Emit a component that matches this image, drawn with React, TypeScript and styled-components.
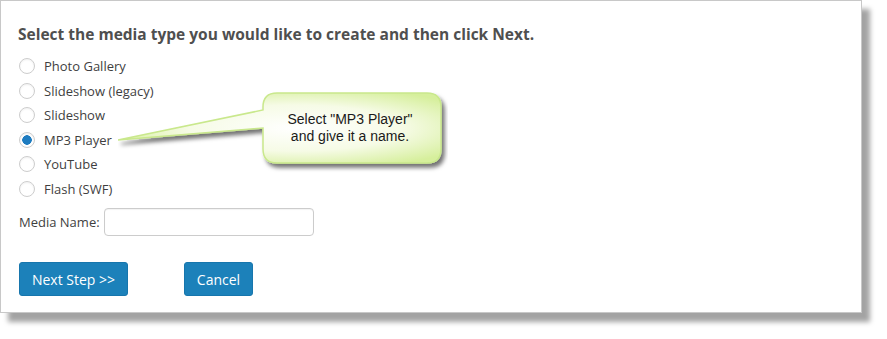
import React, { FC, useState } from "react";
import styled, { createGlobalStyle } from "styled-components";

const GlobalStyle = createGlobalStyle`
  body {
    margin: 0;
    background: #ffffff;
    font-family: "Open Sans", "Liberation Sans", sans-serif;
  }
`;

const mediaTypes = [
  "Photo Gallery",
  "Slideshow (legacy)",
  "Slideshow",
  "MP3 Player",
  "YouTube",
  "Flash (SWF)",
];

const App: FC = () => {
  const [selected, setSelected] = useState("MP3 Player");

  return (
    <>
      <GlobalStyle />
      <Page>
        <Panel>
          <Title>Select the media type you would like to create and then click Next.</Title>
          <RadioList>
            {mediaTypes.map((type) => (
              <RadioRow key={type} onClick={() => setSelected(type)}>
                <Radio $checked={selected === type} />
                <span>{type}</span>
              </RadioRow>
            ))}
          </RadioList>
          <NameRow>
            <label htmlFor="media-name">Media Name:</label>
            <NameInput id="media-name" type="text" />
          </NameRow>
          <ButtonRow>
            <Button $width={109}>Next Step &gt;&gt;</Button>
            <Button $width={69}>Cancel</Button>
          </ButtonRow>
        </Panel>
        <Callout>
          <svg width="330" height="82" viewBox="0 0 330 82">
            <defs>
              <radialGradient id="bubbleFill" cx="0.55" cy="0.5" r="0.6">
                <stop offset="0" stopColor="#ffffff" />
                <stop offset="0.55" stopColor="#f6fbe6" />
                <stop offset="1" stopColor="#d6ef9c" />
              </radialGradient>
              <filter id="bubbleShadow" x="-5%" y="-10%" width="115%" height="140%">
                <feDropShadow dx="3" dy="4" stdDeviation="2" floodColor="#000" floodOpacity="0.55" />
              </filter>
            </defs>
            <path
              d="M159 1 H309 Q323 1 323 15 V57 Q323 71 309 71 H159 Q145 71 145 57 V36 L0 48 L145 18 V15 Q145 1 159 1 Z"
              fill="url(#bubbleFill)"
              stroke="#c9e88c"
              strokeWidth="1.5"
              filter="url(#bubbleShadow)"
            />
          </svg>
          <CalloutText>
            Select "MP3 Player"
            <br />
            and give it a name.
          </CalloutText>
        </Callout>
      </Page>
    </>
  );
};

const Page = styled.div`
  position: relative;
  width: 887px;
  height: 339px;
`;

const Panel = styled.div`
  box-sizing: border-box;
  width: 862px;
  height: 313px;
  padding: 22px 17px 0 17px;
  background: #ffffff;
  border: 1px solid #c8c8c8;
  box-shadow: 8px 9px 5px rgba(0, 0, 0, 0.36);
  color: #444;
`;

const Title = styled.h2`
  margin: 0 0 9px 0;
  font-size: 15.5px;
  line-height: 22px;
  font-weight: 700;
  color: #4f4f4f;
`;

const RadioList = styled.div`
  display: flex;
  flex-direction: column;
`;

const RadioRow = styled.div`
  display: flex;
  align-items: center;
  gap: 9px;
  height: 24.5px;
  padding-left: 1px;
  font-size: 13px;
  color: #3f3f3f;
  cursor: pointer;
`;

const Radio = styled.span<{ $checked: boolean }>`
  box-sizing: border-box;
  width: 16px;
  height: 16px;
  border-radius: 50%;
  border: 1px solid #cdcdcd;
  background: ${({ $checked }) =>
    $checked ? "radial-gradient(circle, #1e7cc0 0 4.5px, #ffffff 5px)" : "#ffffff"};
  box-shadow: inset 0 1px 2px rgba(0, 0, 0, 0.06);
`;

const NameRow = styled.div`
  display: flex;
  align-items: center;
  gap: 4px;
  margin-top: 7px;
  padding-left: 1px;
  font-size: 13px;
  color: #3f3f3f;
`;

const NameInput = styled.input`
  box-sizing: border-box;
  width: 210px;
  height: 28px;
  border: 1px solid #cccccc;
  border-radius: 4px;
  box-shadow: inset 0 1px 1px rgba(0, 0, 0, 0.05);
  outline: none;
`;

const ButtonRow = styled.div`
  display: flex;
  gap: 56px;
  margin-top: 26px;
  padding-left: 1px;
`;

const Button = styled.button<{ $width: number }>`
  box-sizing: border-box;
  width: ${({ $width }) => $width}px;
  height: 34px;
  border: 1px solid #1776ad;
  border-radius: 3px;
  background: #1c81ba;
  color: #ffffff;
  font-family: "Open Sans", "Liberation Sans", sans-serif;
  font-size: 14px;
  padding: 0;
`;

const Callout = styled.div`
  position: absolute;
  left: 118px;
  top: 92px;
  width: 330px;
  height: 82px;

  svg {
    display: block;
  }
`;

const CalloutText = styled.div`
  position: absolute;
  left: 143px;
  top: 1px;
  width: 178px;
  height: 70px;
  display: flex;
  align-items: center;
  justify-content: center;
  text-align: center;
  font-family: "Liberation Sans", Arial, sans-serif;
  font-size: 14px;
  line-height: 17px;
  color: #1a1a1a;
`;

export default App;
